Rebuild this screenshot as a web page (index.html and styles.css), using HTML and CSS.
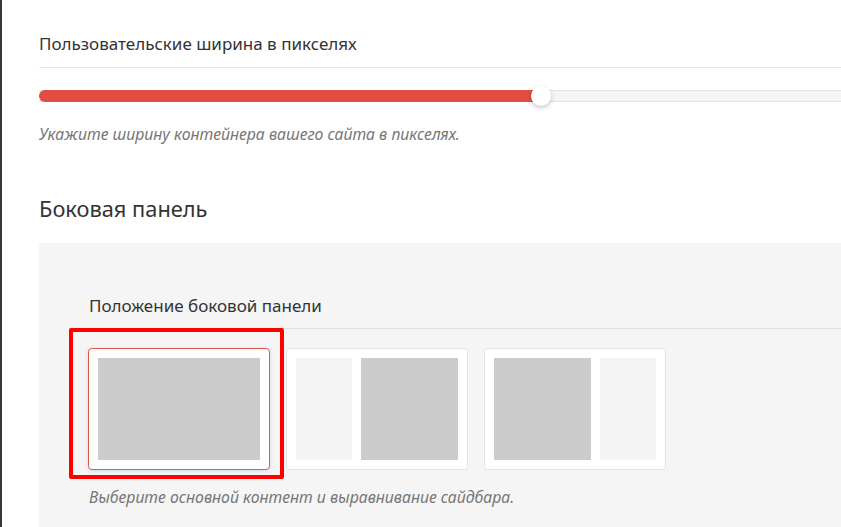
FILE: index.html
```html
<!DOCTYPE html>
<html lang="ru">
<head>
  <meta charset="UTF-8">
  <title>Настройки макета</title>
  <link rel="stylesheet" href="styles.css">
</head>
<body>

  <div class="options">
    <div class="field">
      <h3 class="field-title">Пользовательские ширина в пикселях</h3>
      <div class="range">
        <div class="range-fill" style="width: 502px;"></div>
        <span class="range-thumb" style="left: 502px;"></span>
      </div>
      <p class="field-desc">Укажите ширину контейнера вашего сайта в пикселях.</p>
    </div>

    <h2 class="section-title">Боковая панель</h2>

    <div class="section-box">
      <h3 class="field-title">Положение боковой панели</h3>
      <div class="layouts">
        <div class="layout selected">
          <span class="main"></span>
          <span class="mark"></span>
        </div>
        <div class="layout">
          <span class="side"></span>
          <span class="main"></span>
        </div>
        <div class="layout">
          <span class="main"></span>
          <span class="side"></span>
        </div>
      </div>
      <p class="field-desc">Выберите основной контент и выравнивание сайдбара.</p>
    </div>
  </div>

</body>
</html>
```

FILE: styles.css
```css
body {
  margin: 0;
  padding: 0;
  font-family: 'Noto Sans', 'Open Sans', sans-serif;
  color: #333;
  background: #fff;
  overflow: hidden;
  height: 527px;
}

.options {
  border-left: 2px solid #32373c;
  padding-left: 37px;
  height: 100%;
}

.field {
  padding-top: 34px;
}

.field-title {
  margin: 0;
  font-size: 17px;
  font-weight: 400;
  line-height: 20px;
  padding-bottom: 13px;
  border-bottom: 1px solid #e8e8e8;
}

.range {
  position: relative;
  margin-top: 22px;
  height: 10px;
  background: #f5f5f5;
  border-top: 1px solid #e2e2e2;
  border-bottom: 1px solid #e2e2e2;
}

.range-fill {
  position: absolute;
  left: 0;
  top: -1px;
  height: 12px;
  background: #e14d43;
  border-radius: 6px 0 0 6px;
}

.range-thumb {
  position: absolute;
  top: -5px;
  width: 20px;
  height: 20px;
  margin-left: -10px;
  border-radius: 50%;
  background: #fff;
  box-shadow: 0 2px 5px rgba(0,0,0,0.22);
}

.field-desc {
  margin: 22px 0 0;
  font-size: 15.8px;
  line-height: 20px;
  font-style: italic;
  color: #777;
}

.section-title {
  margin: 51px 0 0;
  font-size: 21.8px;
  font-weight: 400;
  line-height: 28px;
}

.section-box {
  margin-top: 20px;
  background: #f5f5f5;
  border-radius: 4px 0 0 0;
  padding: 53px 0 40px 50px;
  height: 300px;
}

.section-box .field-title {
  padding-bottom: 12px;
  border-bottom-color: #e0e0e0;
}

.layouts {
  display: flex;
  gap: 16px;
  margin-top: 19px;
  margin-left: -1px;
}

.layout {
  position: relative;
  display: flex;
  gap: 9px;
  width: 162px;
  height: 102px;
  padding: 9px;
  background: #fff;
  border: 1px solid #e4e4e4;
  border-radius: 4px;
}

.layout.selected {
  border-color: #e0564d;
  box-shadow: 0 1px 4px rgba(30,110,200,0.18);
}

.layout .main {
  flex: 1;
  background: #ccc;
}

.layout .side {
  width: 56px;
  background: #f4f4f4;
}

.mark {
  position: absolute;
  left: -20px;
  top: -21px;
  width: 207px;
  height: 143px;
  border: 4px solid #f00;
  border-radius: 2px;
}

.section-box .field-desc {
  margin-top: 17px;
}
```
